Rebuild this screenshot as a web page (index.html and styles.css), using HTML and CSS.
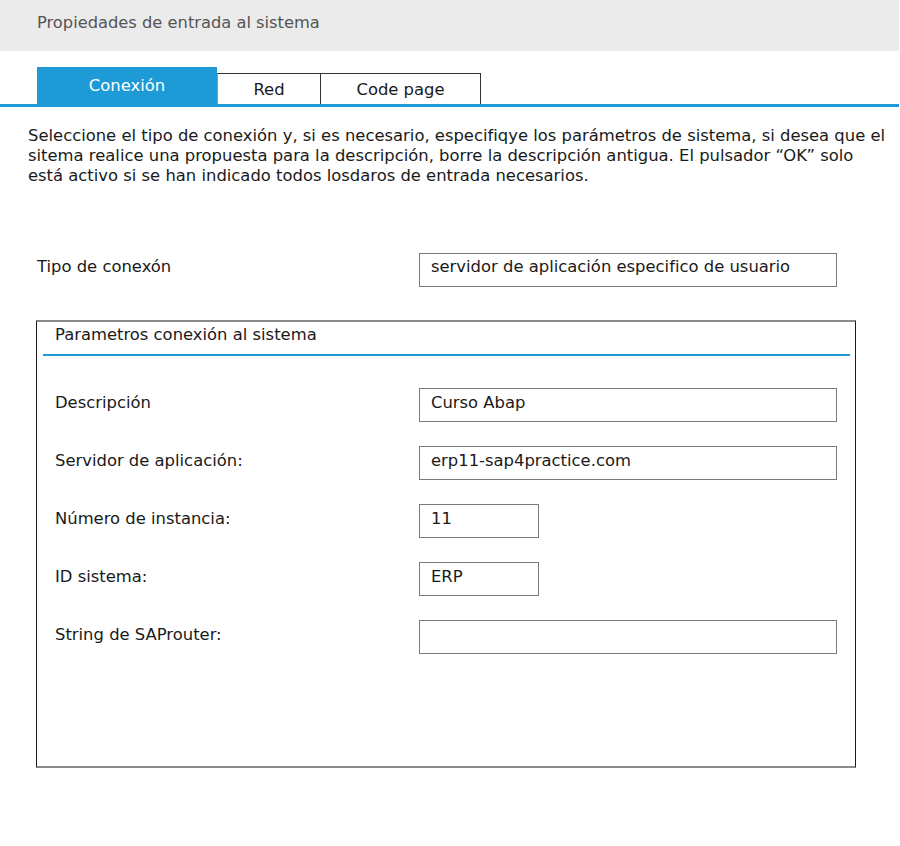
FILE: index.html
```html
<!DOCTYPE html>
<html lang="es">
<head>
<meta charset="utf-8">
<title>Propiedades de entrada al sistema</title>
<link rel="stylesheet" href="styles.css">
</head>
<body>
<div class="header"><span class="title">Propiedades de entrada al sistema</span></div>
<div class="tabs">
  <div class="tab active">Conexión</div>
  <div class="tab tab-red">Red</div>
  <div class="tab tab-code">Code page</div>
</div>
<p class="intro">Seleccione el tipo de conexión y, si es necesario, especifiqye los parámetros de sistema, si desea que el sitema realice una propuesta para la descripción, borre la descripción antigua. El pulsador “OK” solo está activo si se han indicado todos losdaros de entrada necesarios.</p>
<div class="row row-top">
  <div class="label label-top">Tipo de conexón</div>
  <div class="field field-wide">servidor de aplicación especifico de usuario</div>
</div>
<div class="group">
  <div class="group-head">Parametros conexión al sistema</div>
  <div class="group-body">
    <div class="row">
      <div class="label">Descripción</div>
      <div class="field field-wide">Curso Abap</div>
    </div>
    <div class="row">
      <div class="label">Servidor de aplicación:</div>
      <div class="field field-wide">erp11-sap4practice.com</div>
    </div>
    <div class="row">
      <div class="label">Número de instancia:</div>
      <div class="field field-short">11</div>
    </div>
    <div class="row">
      <div class="label">ID sistema:</div>
      <div class="field field-short">ERP</div>
    </div>
    <div class="row">
      <div class="label">String de SAProuter:</div>
      <div class="field field-wide"></div>
    </div>
  </div>
</div>
</body>
</html>
```
FILE: styles.css
```css
html, body {
  margin: 0;
  padding: 0;
  background: #ffffff;
}
body {
  font-family: "DejaVu Sans", "Open Sans", sans-serif;
  font-size: 16.4px;
  color: #1a1a1a;
  width: 900px;
}
.header {
  height: 51px;
  width: 899px;
  background: #ebebeb;
  box-sizing: border-box;
  padding: 13px 0 0 37px;
}
.title {
  font-size: 16.3px;
  line-height: 20px;
  color: #555555;
}
.tabs {
  display: flex;
  align-items: flex-end;
  margin-top: 16px;
  padding-left: 37px;
  border-bottom: 3px solid #1e9ad6;
  width: 862px;
}
.tab {
  box-sizing: border-box;
  height: 31px;
  border: 1px solid #333333;
  border-bottom: none;
  display: flex;
  align-items: center;
  justify-content: center;
  font-size: 16.4px;
  color: #1a1a1a;
  padding-top: 1px;
}
.tab.active {
  height: 37px;
  width: 180px;
  background: #1e9ad6;
  border: none;
  color: #ffffff;
  padding-top: 0;
}
.tab-red {
  width: 104px;
  border-left-color: #9a9a9a;
}
.tab-code {
  width: 161px;
  border-left: 1px solid #333333;
  margin-left: -1px;
}
.intro {
  margin: 19px 0 0 28px;
  width: 860px;
  line-height: 20px;
}
.row {
  display: flex;
  height: 34px;
  margin-bottom: 24px;
}
.row-top {
  margin: 67px 0 0 37px;
}
.label {
  box-sizing: border-box;
  width: 364px;
  padding-top: 4px;
  line-height: 20px;
}
.label-top {
  width: 382px;
}
.field {
  box-sizing: border-box;
  height: 34px;
  border: 1px solid #7a7a7a;
  padding: 3px 0 0 11px;
  line-height: 20px;
}
.group .label {
  padding-top: 5px;
}
.group .field {
  padding-top: 4px;
}
.field-wide {
  width: 418px;
}
.field-short {
  width: 120px;
}
.group {
  box-sizing: border-box;
  margin: 33px 0 0 36px;
  width: 820px;
  height: 448px;
  border: 1px solid #1a1a1a;
  border-top: 2px solid #8a8a8a;
  border-bottom: 2px solid #8a8a8a;
  padding: 0 5px 0 6px;
}
.group-head {
  box-sizing: border-box;
  padding: 3px 0 0 12px;
  height: 34px;
  line-height: 20px;
  border-bottom: 2px solid #1e9ad6;
}
.group-body {
  padding: 32px 0 0 12px;
}
```
